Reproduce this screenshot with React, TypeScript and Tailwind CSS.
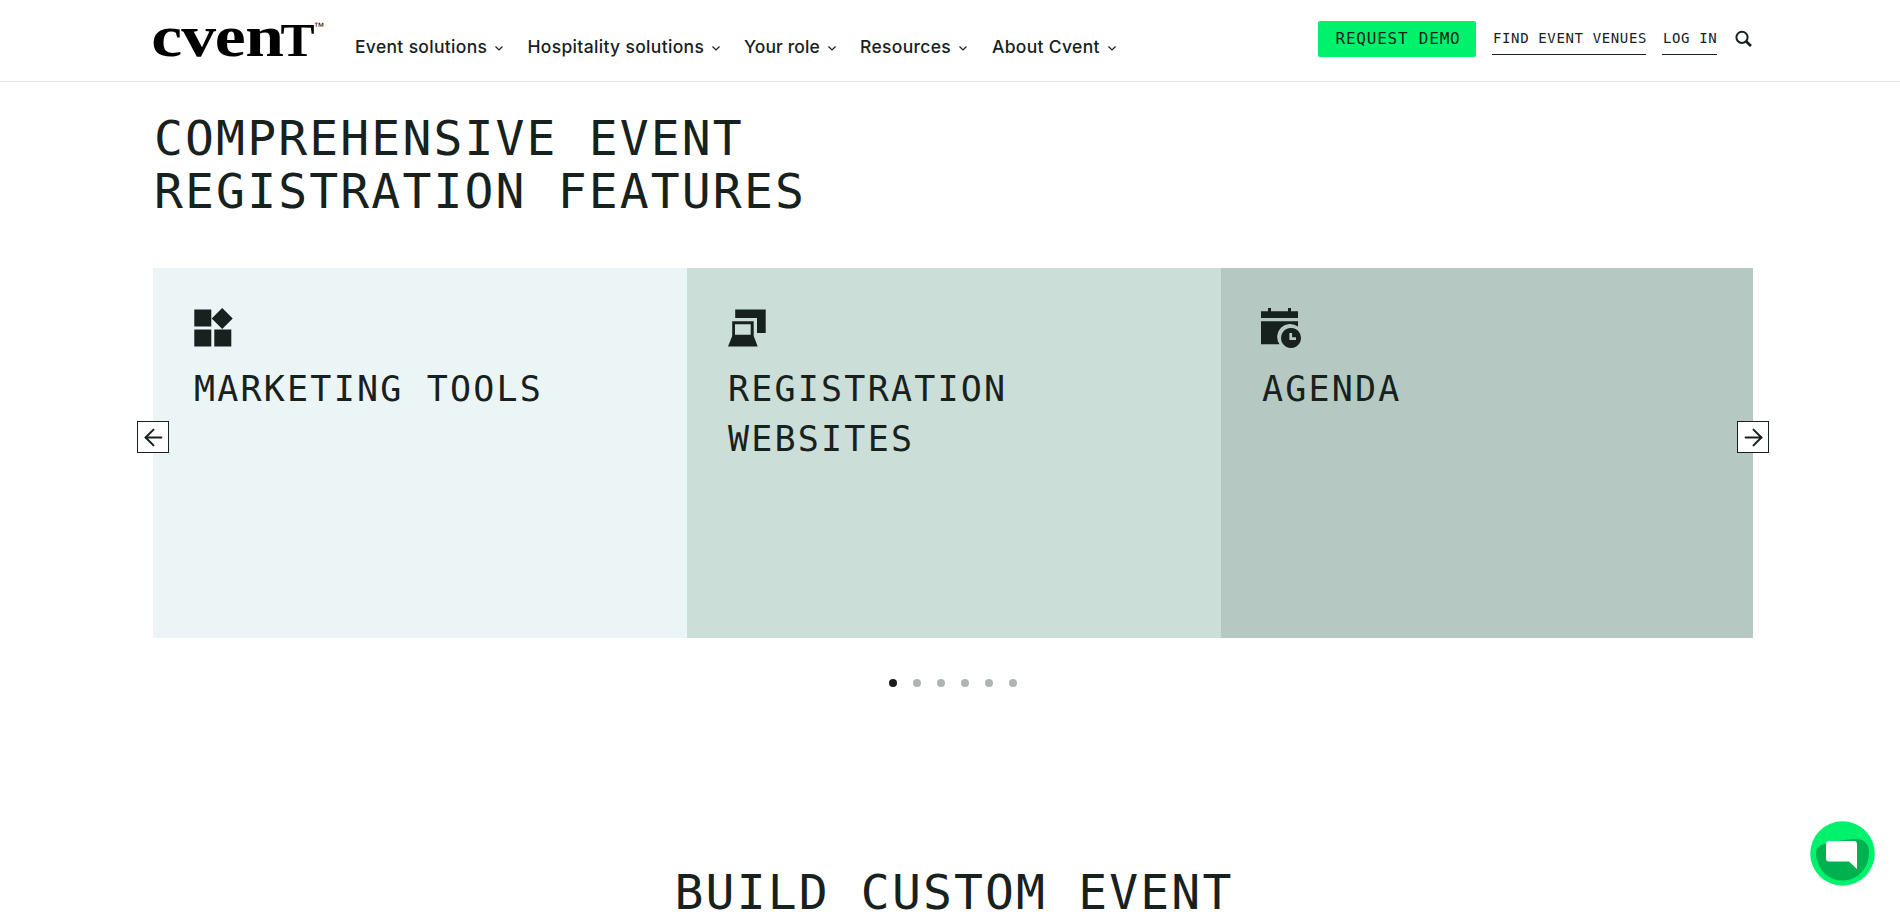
import React, { useState } from 'react';
import { ArrowLeft, ArrowRight } from 'lucide-react';

const NAV_ITEMS = [
  { label: 'Event solutions', width: 'w-[172.5px]' },
  { label: 'Hospitality solutions', width: 'w-[216.5px]' },
  { label: 'Your role', width: 'w-[116px] tracking-[0.1px]' },
  { label: 'Resources', width: 'w-[132px]' },
  { label: 'About Cvent', width: 'w-[130px]' },
];

const Logo: React.FC = () => (
  <svg
    className="h-[42px] w-[174px] shrink-0 overflow-visible font-['Liberation_Serif',serif] font-bold"
    viewBox="0 0 174 42"
    aria-label="Cvent"
  >
    <g fill="#000">
      <text y="37" fontSize="60" x="-1.5 24.3 53.200 79.500" transform="scale(1.160 1)">cven</text>
      <text y="37" fontSize="47" x="117" transform="scale(1.09 1)">T</text>
      <text y="11" fontSize="11" x="160.5" className="font-['Liberation_Sans',sans-serif] font-normal">™</text>
    </g>
  </svg>
);

const WidgetsIcon = () => (
  <svg className="size-10" viewBox="0 0 40 40" fill="#17211e">
    <path d="M1.300 2.500h17v17h-17zM1.300 22.500h17v17h-17zM21.300 22.500h17v17h-17zM29.200 1l10.500 10.500L29.200 22 18.700 11.500z" />
  </svg>
);

const ScreensIcon = () => (
  <svg className="size-10" viewBox="0 0 40 40" fill="#17211e">
    <path d="M8.200 2.500h30.500V26H30V11H8.200z" />
    <path fillRule="evenodd" d="M5.200 14.200h21.500V29l4 10.500H1L5.200 29zM8 17.300v10.400h15.700V17.300z" />
  </svg>
);

const AgendaIcon = () => (
  <svg className="h-10 w-[42px] overflow-visible" viewBox="0 0 42 40" fill="#17211e">
    <path d="M0 4.300h7V1h3v3.300h17V1h3v3.300h7V11H0zM0 14.300h37V19.500A13 13 0 0 0 18.500 37.300H0z" />
    <path fillRule="evenodd" d="M30 21a10 10 0 1 0 .01 0zM28.400 26h2.700v4.300H35V33h-6.600z" />
  </svg>
);

const CARDS = [
  { title: 'Marketing tools', bg: 'w-[534px] bg-[#ecf5f6]', icon: <WidgetsIcon /> },
  { title: 'Registration websites', bg: 'w-[534px] bg-[#cbded7]', icon: <ScreensIcon /> },
  { title: 'Agenda', bg: 'w-[532px] bg-[#b5c9c2]', icon: <AgendaIcon /> },
];

const Header: React.FC = () => (
  <header className="h-[82px] border-b border-[#e2e8e6] bg-white">
    <div className="mx-auto flex w-[1600px] translate-x-[3px] items-start">
      <div className="pt-[19px]">
        <Logo />
      </div>

      <nav className="ml-[28px] flex pt-[35px] font-['Inter',sans-serif] text-[17.5px] leading-6 font-medium tracking-[0.32px] text-[#17211e]">
        {NAV_ITEMS.map((item) => (
          <a key={item.label} href="#" className={`flex items-center whitespace-nowrap ${item.width}`}>
            {item.label}
            <svg className="mt-[3px] ml-2 h-[5px] w-2" viewBox="0 0 8 5" fill="none" stroke="#17211e" strokeWidth="1.2">
              <path d="M.5.5 4 4 7.500.5" />
            </svg>
          </a>
        ))}
      </nav>

      {/* Right: Actions */}
      <div className="ml-auto flex items-start font-['DejaVu_Sans_Mono',monospace] text-[#17211e] uppercase">
        <a href="#" className="mt-[21px] flex h-9 w-[158px] items-center justify-center rounded-xs bg-[#00f26d] pl-[2px] text-[16px] leading-[34px] tracking-[0.79px] whitespace-nowrap">
          Request demo
        </a>
        <a href="#" className="mt-[21px] ml-4 h-[34px] w-[154px] border-b border-[#17211e] pl-px text-[14px] leading-[34px] tracking-[0.63px] whitespace-nowrap">
          Find event venues
        </a>
        <a href="#" className="mt-[21px] ml-4 h-[34px] w-[55px] border-b border-[#17211e] pl-px text-[14px] leading-[34px] tracking-[0.63px] whitespace-nowrap">
          Log in
        </a>
        <button className="mt-[30px] mr-px ml-[18px] cursor-pointer" aria-label="Search">
          <svg className="size-[17px]" viewBox="0 0 17 17" fill="none" stroke="#17211e">
            <circle cx="7" cy="7.300" r="5.600" strokeWidth="2" />
            <path d="m11 11.300 5 4.700" strokeWidth="2.800" />
          </svg>
        </button>
      </div>
    </div>
  </header>
);

export default function App() {
  const [active, setActive] = useState(0);

  const prev = () => setActive((active + 5) % 6);
  const next = () => setActive((active + 1) % 6);

  return (
    <div className="relative h-[916px] overflow-hidden bg-white text-[#17211e]">
      <Header />

      <main className="mx-auto w-[1600px] translate-x-[3px] font-['DejaVu_Sans_Mono',monospace]">
        <h2 className="w-[800px] pt-[30px] pl-px text-[48px] leading-[53px] tracking-[2.15px] uppercase">
          Comprehensive event registration features
        </h2>

        {/* Carousel */}
        <div className="relative mt-[50px] flex h-[370px]">
          {CARDS.map((card) => (
            <div key={card.title} className={`pt-[39px] pl-10 ${card.bg}`}>
              {card.icon}
              <h3 className="mt-[17px] w-[400px] pl-px text-[35px] leading-[50px] tracking-[2.2px] uppercase">{card.title}</h3>
            </div>
          ))}
          <button
            onClick={prev}
            className="absolute top-[153px] -left-4 flex size-8 cursor-pointer items-center justify-center border border-[#17211e] bg-white"
            aria-label="Previous"
          >
            <ArrowLeft className="size-[27px] shrink-0" strokeWidth={1.8} />
          </button>
          <button
            onClick={next}
            className="absolute top-[153px] -right-4 flex size-8 cursor-pointer items-center justify-center border border-[#17211e] bg-white"
            aria-label="Next"
          >
            <ArrowRight className="size-[27px] shrink-0" strokeWidth={1.8} />
          </button>
        </div>

        <div className="mt-[41px] flex justify-center gap-4">
          {[0, 1, 2, 3, 4, 5].map((i) => (
            <button
              key={i}
              onClick={() => setActive(i)}
              className={`size-2 cursor-pointer rounded-full ${i === active ? 'bg-[#1a1c1b]' : 'bg-[#adb3b1]'}`}
              aria-label={`Slide ${i + 1}`}
            />
          ))}
        </div>

        <h2 className="mt-[179px] pl-[2px] text-center text-[48px] leading-[53px] tracking-[2.15px] uppercase">Build custom event</h2>
      </main>

      {/* Chat launcher */}
      <button className="absolute top-[821px] right-[25px] cursor-pointer" aria-label="Chat">
        <svg className="size-[65px]" viewBox="0 0 65 65">
          <circle cx="32.500" cy="32.500" r="32.300" fill="#00f26d" />
          <path d="M6 31c0-4 3-6.500 9-8 10-2.500 22-5 31-5 9 0 13 6 13 13 0 16-11 28.500-26.500 28.500S6 47 6 31z" fill="#00b14f" />
          <path d="M19 20h25q3 0 3 3v25l-8-7.500H19q-3 0-3-3V23q0-3 3-3z" fill="#fff" />
        </svg>
      </button>
    </div>
  );
}
